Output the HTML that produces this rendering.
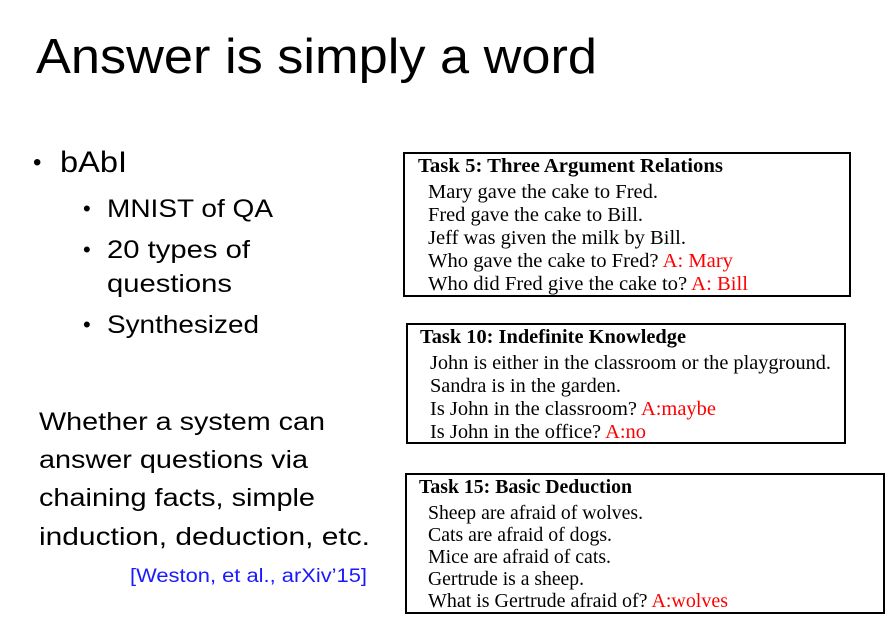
<!DOCTYPE html>
<html><head><meta charset="utf-8"><style>
html,body{margin:0;padding:0;background:#fff;width:892px;height:628px;overflow:hidden}
svg{display:block}
.s{font-family:"Liberation Sans",sans-serif;fill:#000}
.r{font-family:"Liberation Serif",serif;fill:#000;font-size:20px}
.b{font-family:"Liberation Serif",serif;font-weight:bold;font-size:19.5px;fill:#000}
.red{fill:#f00}
</style></head><body>
<svg width="892" height="628" viewBox="0 0 892 628">
<text class="s" x="36" y="73" font-size="49" textLength="561" lengthAdjust="spacingAndGlyphs">Answer is simply a word</text>
<text class="s" x="33" y="170" font-size="24">•</text>
<text class="s" x="60" y="172" font-size="30" textLength="67" lengthAdjust="spacingAndGlyphs">bAbI</text>
<g class="s" font-size="25">
<text x="83" y="216" font-size="22">•</text><text x="107" y="217" textLength="166" lengthAdjust="spacingAndGlyphs">MNIST of QA</text>
<text x="83" y="257" font-size="22">•</text><text x="107" y="258" textLength="143" lengthAdjust="spacingAndGlyphs">20 types of</text>
<text x="107" y="292" textLength="125" lengthAdjust="spacingAndGlyphs">questions</text>
<text x="83" y="332" font-size="22">•</text><text x="107" y="333" textLength="152" lengthAdjust="spacingAndGlyphs">Synthesized</text>
<text x="39" y="430" textLength="286" lengthAdjust="spacingAndGlyphs">Whether a system can</text>
<text x="39" y="468" textLength="269" lengthAdjust="spacingAndGlyphs">answer questions via</text>
<text x="39" y="506" textLength="276" lengthAdjust="spacingAndGlyphs">chaining facts, simple</text>
<text x="39" y="545" textLength="331" lengthAdjust="spacingAndGlyphs">induction, deduction, etc.</text>
</g>
<text class="s" x="130" y="582" font-size="19" style="fill:#1a1aff" textLength="237" lengthAdjust="spacingAndGlyphs">[Weston, et al., arXiv’15]</text>

<rect x="404" y="153" width="446" height="143" fill="none" stroke="#000" stroke-width="2"/>
<text class="b" x="418" y="172" textLength="305" lengthAdjust="spacingAndGlyphs">Task 5: Three Argument Relations</text>
<text class="r" x="428" y="198" textLength="230" lengthAdjust="spacingAndGlyphs">Mary gave the cake to Fred.</text>
<text class="r" x="428" y="221" textLength="215" lengthAdjust="spacingAndGlyphs">Fred gave the cake to Bill.</text>
<text class="r" x="428" y="244" textLength="258" lengthAdjust="spacingAndGlyphs">Jeff was given the milk by Bill.</text>
<text class="r" x="428" y="267" textLength="305" lengthAdjust="spacingAndGlyphs">Who gave the cake to Fred? <tspan class="red">A: Mary</tspan></text>
<text class="r" x="428" y="290" textLength="320" lengthAdjust="spacingAndGlyphs">Who did Fred give the cake to? <tspan class="red">A: Bill</tspan></text>

<rect x="407" y="324" width="438" height="119" fill="none" stroke="#000" stroke-width="2"/>
<text class="b" x="420" y="343" textLength="266" lengthAdjust="spacingAndGlyphs">Task 10: Indefinite Knowledge</text>
<text class="r" x="430" y="369" textLength="401" lengthAdjust="spacingAndGlyphs">John is either in the classroom or the playground.</text>
<text class="r" x="430" y="392" textLength="191" lengthAdjust="spacingAndGlyphs">Sandra is in the garden.</text>
<text class="r" x="430" y="415" textLength="286" lengthAdjust="spacingAndGlyphs">Is John in the classroom? <tspan class="red">A:maybe</tspan></text>
<text class="r" x="430" y="438" textLength="216" lengthAdjust="spacingAndGlyphs">Is John in the office? <tspan class="red">A:no</tspan></text>

<rect x="406" y="474" width="478" height="139" fill="none" stroke="#000" stroke-width="2"/>
<text class="b" x="419" y="493" textLength="213" lengthAdjust="spacingAndGlyphs">Task 15: Basic Deduction</text>
<text class="r" x="428" y="519" textLength="215" lengthAdjust="spacingAndGlyphs">Sheep are afraid of wolves.</text>
<text class="r" x="428" y="541" textLength="184" lengthAdjust="spacingAndGlyphs">Cats are afraid of dogs.</text>
<text class="r" x="428" y="563" textLength="183" lengthAdjust="spacingAndGlyphs">Mice are afraid of cats.</text>
<text class="r" x="428" y="585" textLength="156" lengthAdjust="spacingAndGlyphs">Gertrude is a sheep.</text>
<text class="r" x="428" y="607" textLength="300" lengthAdjust="spacingAndGlyphs">What is Gertrude afraid of? <tspan class="red">A:wolves</tspan></text>
</svg>
</body></html>
